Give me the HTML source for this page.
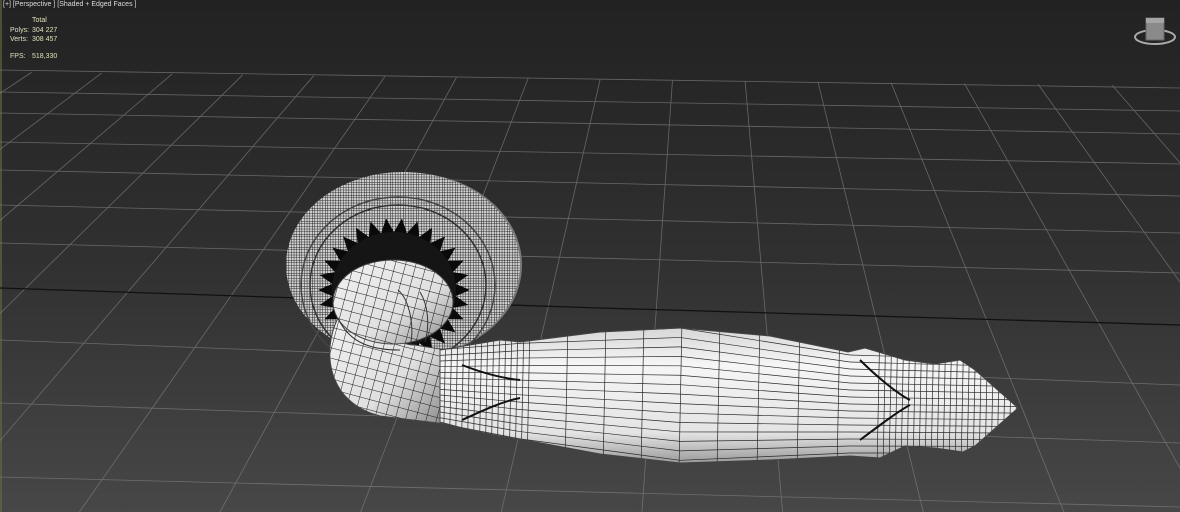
<!DOCTYPE html><html><head><style>
html,body{margin:0;padding:0;width:1180px;height:512px;overflow:hidden;background:#333}
#v{position:absolute;left:0;top:0}
.t{position:absolute;font-family:"Liberation Sans",sans-serif;font-size:7px;color:#e0e0c0;white-space:nowrap}
</style></head><body>
<svg id="v" width="1180" height="512" viewBox="0 0 1180 512" xmlns="http://www.w3.org/2000/svg">
<defs>
<linearGradient id="bg" x1="0" y1="0" x2="0" y2="1">
<stop offset="0" stop-color="#222"/><stop offset="0.5" stop-color="#303030"/><stop offset="1" stop-color="#474747"/></linearGradient>
<linearGradient id="hg" x1="0" y1="0" x2="0" y2="1">
<stop offset="0" stop-color="#d0d0d0"/><stop offset="0.3" stop-color="#f6f6f6"/><stop offset="0.75" stop-color="#e4e4e4"/><stop offset="1" stop-color="#8a8a8a"/></linearGradient>
<linearGradient id="kg" x1="0" y1="0" x2="1" y2="1">
<stop offset="0" stop-color="#f2f2f2"/><stop offset="0.6" stop-color="#e0e0e0"/><stop offset="1" stop-color="#8a8a8a"/></linearGradient>
<pattern id="dense" width="2.6" height="2.6" patternUnits="userSpaceOnUse"><rect width="3" height="3" fill="#d0d0d0"/><path d="M0 0V3M0 0H3" stroke="#1a1a1a" stroke-width="0.9"/></pattern>
<pattern id="kw" width="10" height="10" patternUnits="userSpaceOnUse" patternTransform="rotate(15)"><path d="M0 0V10M0 0H10" stroke="#1a1a1a" stroke-width="1"/></pattern>
<clipPath id="hc"><path id="hp" d="M440 350 L470 345 L500 340 L520 342 L600 332 L680 328 L770 336 L848 352 L865 348 L905 360 L935 364 L960 360 L975 370 L1018 408 L975 446 L963 452 L935 448 L905 446 L880 458 L850 456 L770 460 L680 463 L600 454 L525 440 L500 436 L470 430 L440 422 Z"/></clipPath>
</defs>
<rect width="1180" height="512" fill="url(#bg)"/>
<rect x="0" y="0" width="2" height="512" fill="#6b6b40" opacity="0.6"/>
<g id="grid" stroke="#808080" stroke-width="0.8" fill="none" opacity="0.7"></g>
<path d="M0 288 L600 308 L1180 325" stroke="#111" stroke-width="1.3" fill="none"/>
<ellipse cx="410" cy="265" rx="112" ry="92" fill="#7a7a7a"/>
<ellipse cx="403" cy="265" rx="117" ry="93" fill="url(#dense)"/>
<ellipse cx="398" cy="285" rx="88" ry="80" fill="url(#dense)" stroke="#333" stroke-width="1.5"/>
<ellipse cx="398" cy="285" rx="97" ry="88" fill="none" stroke="#444" stroke-width="1.5"/>
<g id="star"></g>
<path d="M338 318 C322 350 326 402 380 416 L446 424 L446 350 L415 345 C395 345 385 330 375 305 Z" fill="url(#kg)"/>
<path d="M338 318 C322 350 326 402 380 416 L446 424 L446 350 L415 345 C395 345 385 330 375 305 Z" fill="url(#kw)" stroke="#444"/>
<ellipse cx="393" cy="302" rx="60" ry="42" fill="url(#kg)"/>
<ellipse cx="393" cy="302" rx="60" ry="42" fill="url(#kw)" stroke="#444"/>
<path d="M398 290 C410 300 415 330 410 345 M420 292 C428 305 430 325 425 342" fill="none" stroke="#333"/>
<path d="M338 318 C350 345 375 350 400 350" fill="none" stroke="#333"/>
<g clip-path="url(#hc)">
<rect x="430" y="320" width="600" height="150" fill="url(#hg)"/>
<g id="hw" stroke="#2a2a2a" stroke-width="0.7" fill="none"></g>
<path d="M860 360 C880 380 900 395 910 400 M860 440 C880 425 900 410 910 405 M462 365 C480 372 500 378 520 380 M462 420 C480 412 500 402 520 398" stroke="#111" stroke-width="2" fill="none"/>
</g>
<use href="#hp" fill="none" stroke="#444" stroke-width="1"/>
<ellipse cx="1155" cy="37" rx="20" ry="7" fill="none" stroke="#aaa" stroke-width="2"/>
<rect x="1146" y="18" width="18" height="22" fill="#8a8a8a" stroke="#666"/>
<rect x="1146" y="18" width="18" height="5" fill="#a5a5a5"/>
</svg>
<div class="t" style="left:3px;top:1px;color:#ddd">[+] [Perspective ] [Shaded + Edged Faces ]</div>
<div class="t" style="left:32px;top:17px">Total</div>
<div class="t" style="left:10px;top:27px">Polys:</div><div class="t" style="left:32px;top:27px">304 227</div>
<div class="t" style="left:10px;top:36px">Verts:</div><div class="t" style="left:32px;top:36px">308 457</div>
<div class="t" style="left:10px;top:53px">FPS:</div><div class="t" style="left:32px;top:53px">518,330</div>
<script>
var NS="http://www.w3.org/2000/svg";
function L(g,x1,y1,x2,y2){var l=document.createElementNS(NS,"line");l.setAttribute("x1",x1);l.setAttribute("y1",y1);l.setAttribute("x2",x2);l.setAttribute("y2",y2);g.appendChild(l);}
var g=document.getElementById("grid");
var yL=[70,92,113,142,170,205,243,340,403,477],yR=[88,111,134,164,196,233,273,385,443,507];
for(var i=0;i<yL.length;i++)L(g,0,yL[i],1180,yR[i]);
for(var k=-12;k<=10;k++){var a=600+72.5*k;function X(y){return 705+(a-705)*(1+0.94*(y-80)/432);}
var yt=72+(a/1180)*14;L(g,X(yt),yt,X(520),520);}
var s=document.getElementById("star"),d="",n=30,cx=394,cy=290;
for(var i=0;i<n;i++){var a2=i/n*2*Math.PI,b=(i+0.5)/n*2*Math.PI;
d+=(i?"L":"M")+(cx+76*Math.cos(a2))+" "+(cy+72*Math.sin(a2))+"L"+(cx+62*Math.cos(b))+" "+(cy+58*Math.sin(b));}
d+="Z";var p=document.createElementNS(NS,"path");p.setAttribute("d",d);p.setAttribute("fill","#0a0a0a");s.appendChild(p);
var c=document.createElementNS(NS,"ellipse");c.setAttribute("cx",cx);c.setAttribute("cy",cy);c.setAttribute("rx",62);c.setAttribute("ry",58);c.setAttribute("fill","#151515");s.appendChild(c);
var hw=document.getElementById("hw");
for(var x=440;x<1020;x+=(x<525||x>845)?6:(x<700?38:40))L(hw,x,320,x-3,470);
for(var t=0;t<=1;t+=0.07){var y1=328+t*135,y2=355+t*100;L(hw,520,336+t*105,680,y1);L(hw,680,y1,850,y2);L(hw,850,y2,1020,360+t*95);L(hw,430,345+t*78,520,336+t*105);}
</script>
</body></html>
